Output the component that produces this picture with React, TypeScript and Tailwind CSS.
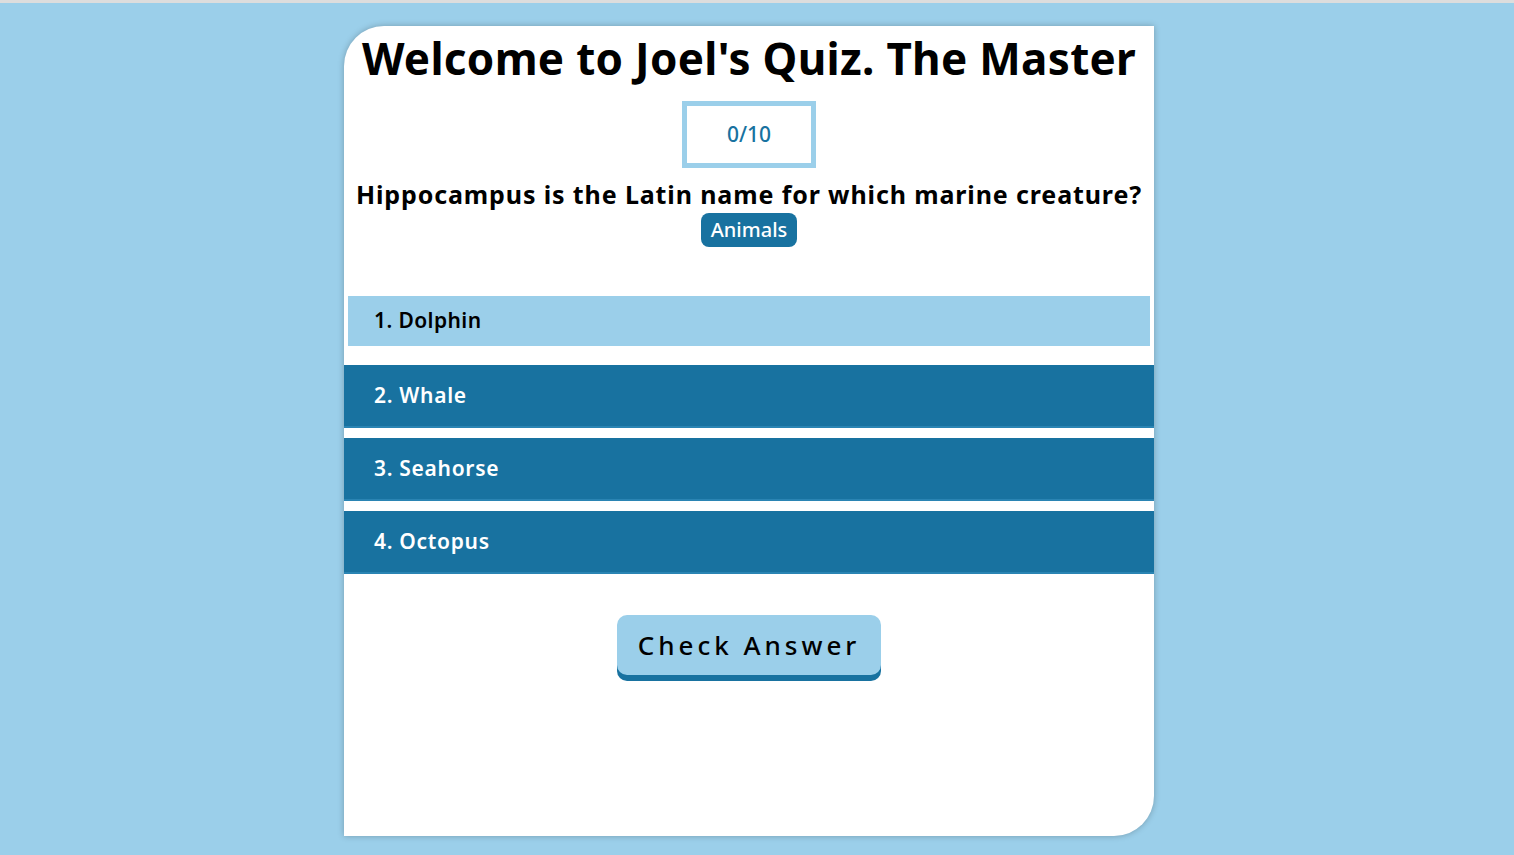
import React from "react";

const options = ["1. Dolphin", "2. Whale", "3. Seahorse", "4. Octopus"];

export default function App() {
  return (
    <div
      className="min-h-[855px] w-full bg-[#9bcfea] border-t-[3px] border-[#dddddd] flex justify-center pt-[23px] pr-[16px]"
      style={{ fontFamily: '"Noto Sans", "Open Sans", sans-serif' }}
    >
      <div className="w-[810px] h-[810px] bg-white rounded-tl-[40px] rounded-br-[40px] shadow-[0_0_6px_rgba(0,0,0,0.25)] flex flex-col items-center">
        <h1 className="mt-[6px] text-[44px] leading-[52px] font-bold text-black tracking-[0.3px] whitespace-nowrap">
          Welcome to Joel's Quiz. The Master
        </h1>
        <div className="mt-[17px] w-[134px] h-[67px] border-[5px] border-[#9bcfea] flex items-center justify-center text-[21px] font-medium text-[#1872a0]">
          0/10
        </div>
        <p className="mt-[10px] text-[25px] leading-[32px] font-bold text-black tracking-[0.88px] whitespace-nowrap">
          Hippocampus is the Latin name for which marine creature?
        </p>
        <div className="mt-[3px] h-[34px] px-[10px] rounded-[8px] bg-[#1872a0] text-white text-[20px] font-medium flex items-center">
          Animals
        </div>
        <div className="mt-[49px] w-full flex flex-col">
          <div className="mx-[4px] h-[50px] bg-[#9bcfea] flex items-center pl-[26px] text-[21px] font-semibold text-black tracking-[0.4px]">
            {options[0]}
          </div>
          <div className="mt-[19px] flex flex-col gap-[10px]">
            {options.slice(1).map((o) => (
              <div
                key={o}
                className="h-[63px] bg-[#1872a0] flex items-center pl-[30px] text-[21px] font-semibold text-white tracking-[0.7px] border-b-[2px] border-[#2a84b3]"
              >
                {o}
              </div>
            ))}
          </div>
        </div>
        <button className="mt-[41px] w-[264px] h-[60px] rounded-[10px] bg-[#9bcfea] shadow-[0_6px_0_#1872a0] text-[26px] font-medium tracking-[4px] text-black flex items-center justify-center">
          Check Answer
        </button>
      </div>
    </div>
  );
}
